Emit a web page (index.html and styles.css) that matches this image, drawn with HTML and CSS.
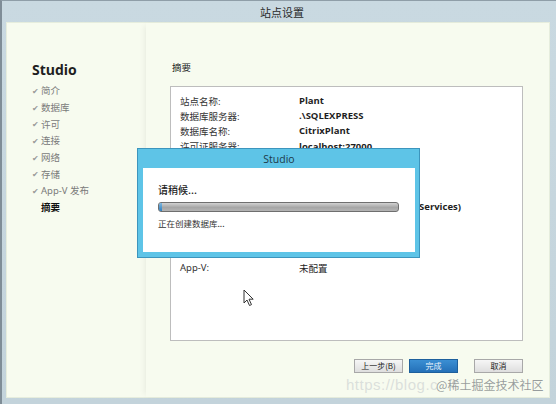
FILE: index.html
```html
<!DOCTYPE html>
<html lang="zh-CN">
<head>
<meta charset="utf-8">
<title>站点设置</title>
<link rel="stylesheet" href="styles.css">
</head>
<body>
<div class="window">
  <div class="titlebar">站点设置</div>
  <div class="client">
    <aside class="sidebar">
      <div class="brand">Studio</div>
      <ul class="steps">
        <li class="done"><span class="chk">✔</span>简介</li>
        <li class="done"><span class="chk">✔</span>数据库</li>
        <li class="done"><span class="chk">✔</span>许可</li>
        <li class="done"><span class="chk">✔</span>连接</li>
        <li class="done"><span class="chk">✔</span>网络</li>
        <li class="done"><span class="chk">✔</span>存储</li>
        <li class="done"><span class="chk">✔</span>App-V 发布</li>
        <li class="current"><span class="chk"></span>摘要</li>
      </ul>
    </aside>
    <main class="main">
      <div class="heading">摘要</div>
      <div class="summary">
        <div class="row"><span class="lbl">站点名称:</span><span class="val">Plant</span></div>
        <div class="row"><span class="lbl">数据库服务器:</span><span class="val">.\SQLEXPRESS</span></div>
        <div class="row"><span class="lbl">数据库名称:</span><span class="val">CitrixPlant</span></div>
        <div class="row"><span class="lbl">许可证服务器:</span><span class="val">localhost:27000</span></div>
        <div class="row"></div>
        <div class="row"></div>
        <div class="row"></div>
        <div class="row"><span class="lbl"></span><span class="val">XenApp Platinum (Media Services)</span></div>
        <div class="row"></div>
        <div class="row"></div>
        <div class="row"></div>
        <div class="row"><span class="lbl">App-V:</span><span class="val plain">未配置</span></div>
      </div>
      <div class="buttons">
        <button class="btn">上一步(B)</button>
        <button class="btn primary">完成</button>
        <button class="btn cancel">取消</button>
      </div>
    </main>
  </div>

  <div class="dialog">
    <div class="dlg-title">Studio</div>
    <div class="dlg-body">
      <div class="wait">请稍候...</div>
      <div class="progress"><div class="progress-fill"></div></div>
      <div class="status">正在创建数据库...</div>
    </div>
  </div>

  <svg class="cursor" width="12" height="18" viewBox="0 0 12 18">
    <path d="M1 1 L1 14 L4 11 L6.5 16.5 L8.5 15.6 L6 10.2 L10.2 10.2 Z" fill="#fff" stroke="#333" stroke-width="1" stroke-linejoin="round"/>
  </svg>

  <div class="watermark"><span class="wm-url">https://blog.c</span><span class="wm-tag">@稀土掘金技术社区</span></div>
</div>
</body>
</html>
```

FILE: styles.css
```css
* { box-sizing: border-box; margin: 0; padding: 0; }
html, body { width: 556px; height: 404px; overflow: hidden; }
body {
  font-family: "Noto Sans", "Noto Sans CJK SC", sans-serif;
  background: #c7d7df;
}
.window {
  position: relative;
  width: 556px;
  height: 404px;
  display: flex;
  flex-direction: column;
  background: linear-gradient(#c9d9e1, #c3d3db);
  border-top: 1px solid #8f9ea8;
  border-left: 2px solid #7f8d97;
  padding: 0 6px 6px 4px;
}
.titlebar {
  height: 21px;
  display: flex;
  align-items: center;
  justify-content: center;
  font-family: "Noto Sans CJK SC", sans-serif;
  font-size: 11px;
  color: #2a2a2a;
  padding-left: 8px;
}
.client {
  flex: 1;
  display: flex;
  background: #f7fbef;
  border: 1px solid #e6eddd;
}
.sidebar {
  width: 139px;
  padding: 38px 0 0 25px;
}
.brand {
  font-family: "Open Sans", "Noto Sans", sans-serif;
  font-weight: 700;
  font-size: 14px;
  line-height: 18px;
  color: #1e1e1e;
}
.steps {
  list-style: none;
  margin-top: 3px;
}
.steps li {
  display: flex;
  align-items: center;
  height: 16.7px;
  font-family: "Noto Sans", "Noto Sans CJK SC", sans-serif;
  font-size: 9.5px;
  color: #7a7a7a;
}
.chk {
  width: 9px;
  font-size: 8px;
  color: #999;
}
.steps li.current {
  color: #111;
  font-weight: 700;
}
.main {
  flex: 1;
  display: flex;
  flex-direction: column;
  padding: 37px 26px 0 24px;
  box-shadow: -4px 0 6px -3px rgba(0,0,0,0.07);
}
.heading {
  font-family: "Noto Sans CJK SC", sans-serif;
  font-size: 9.5px;
  line-height: 14px;
  color: #222;
  padding-left: 2px;
}
.summary {
  margin-top: 12px;
  height: 255px;
  background: #fff;
  border: 1px solid #bdbdbd;
  padding: 6px 0 0 9px;
}
.row {
  display: flex;
  height: 15.2px;
  align-items: center;
  font-size: 9.5px;
  color: #222;
  white-space: nowrap;
}
.lbl {
  width: 119px;
  font-family: "Noto Sans", "Noto Sans CJK SC", sans-serif;
  color: #333;
}
.val {
  font-family: "Open Sans", "Noto Sans CJK SC", sans-serif;
  font-weight: 700;
  color: #1e1e1e;
}
.val.plain { font-weight: 400; }
.buttons {
  display: flex;
  justify-content: flex-end;
  gap: 6px;
  margin-top: 18px;
}
.btn {
  width: 49px;
  height: 14px;
  font-family: "Noto Sans CJK SC", sans-serif;
  font-size: 8px;
  line-height: 12px;
  color: #222;
  background: linear-gradient(#f6f6f6, #dedede);
  border: 1px solid #a8a8a8;
}
.btn.primary {
  background: linear-gradient(#3b8fd3, #2470b8);
  border-color: #1d5f9c;
  color: #e9f3fb;
}
.btn.cancel { margin-left: 10px; }

.dialog {
  position: absolute;
  left: 135px;
  top: 147px;
  width: 283px;
  height: 110px;
  background: #5ec4e7;
  border: 1px solid #3c95bd;
  display: flex;
  flex-direction: column;
  padding: 0 4px 5px 5px;
}
.dlg-title {
  height: 19px;
  display: flex;
  align-items: center;
  justify-content: center;
  font-family: "Open Sans", "Noto Sans", sans-serif;
  font-size: 10.5px;
  color: #1d3a4a;
}
.dlg-body {
  flex: 1;
  background: #fff;
  padding: 15px 14px 0 15px;
}
.wait {
  font-family: "Noto Sans CJK SC", sans-serif;
  font-weight: 500;
  font-size: 10px;
  line-height: 14px;
  color: #222;
}
.progress {
  margin-top: 5px;
  width: 241px;
  height: 10px;
  border: 1px solid #6f6f6f;
  border-radius: 3px;
  background: linear-gradient(#d2d2d2, #a6a6a6 55%, #b4b4b4);
  overflow: hidden;
}
.progress-fill {
  width: 3px;
  height: 100%;
  background: linear-gradient(#7fb8e0, #2f7fbf);
}
.status {
  margin-top: 5px;
  font-family: "Noto Sans CJK SC", sans-serif;
  font-size: 8.5px;
  line-height: 12px;
  color: #333;
}
.cursor {
  position: absolute;
  left: 241px;
  top: 288px;
}
.watermark {
  position: absolute;
  left: 344px;
  top: 375px;
  display: flex;
  align-items: center;
  white-space: nowrap;
  font-family: "Liberation Sans", "Noto Sans CJK SC", sans-serif;
}
.wm-url {
  font-size: 15px;
  color: rgba(190,195,200,0.5);
  letter-spacing: 0.5px;
}
.wm-tag {
  margin-left: -2px;
  font-family: "Noto Sans CJK SC", sans-serif;
  font-size: 12px;
  color: rgba(120,125,130,0.75);
}
```
